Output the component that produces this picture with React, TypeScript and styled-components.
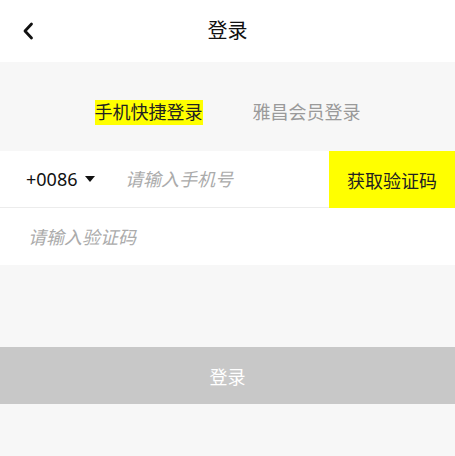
import React from "react";
import styled, { createGlobalStyle } from "styled-components";

const Global = createGlobalStyle`
  html, body { margin: 0; padding: 0; background: #f7f7f7; }
  body { font-family: "Noto Sans", "Noto Sans CJK SC", sans-serif; }
  * { box-sizing: border-box; }
`;

const Page = styled.div`
  width: 455px;
  height: 456px;
  background: #f7f7f7;
  display: flex;
  flex-direction: column;
  overflow: hidden;
`;

const Header = styled.header`
  height: 62px;
  background: #fff;
  display: grid;
  grid-template-columns: 62px 1fr 62px;
  align-items: center;
`;

const BackButton = styled.button`
  border: 0;
  background: none;
  padding: 0 0 0 21px;
  height: 100%;
  display: flex;
  align-items: center;
  cursor: pointer;
`;

const Title = styled.h1`
  margin: 0;
  font-size: 20px;
  font-weight: 400;
  color: #111;
  text-align: center;
  line-height: 62px;
`;

const Tabs = styled.nav`
  height: 89px;
  display: flex;
  justify-content: center;
  align-items: flex-start;
  padding-top: 38px;
  gap: 50px;
`;

const Tab = styled.span<{ $active?: boolean }>`
  font-size: 18px;
  line-height: 25px;
  height: 25px;
  color: ${(p) => (p.$active ? "#222" : "#9a9a9a")};
  background: ${(p) => (p.$active ? "#ffff00" : "transparent")};
`;

const Form = styled.div`
  background: #fff;
  display: flex;
  flex-direction: column;
`;

const Row = styled.div<{ $divider?: boolean }>`
  height: 57px;
  display: flex;
  align-items: stretch;
  border-bottom: ${(p) => (p.$divider ? "1px solid #ececec" : "0")};
`;

const Country = styled.div`
  display: flex;
  align-items: center;
  padding-left: 26px;
  width: 125px;
  font-size: 18px;
  color: #111;
  gap: 8px;
`;

const Caret = styled.span`
  width: 0;
  height: 0;
  border-left: 5.5px solid transparent;
  border-right: 5.5px solid transparent;
  border-top: 6px solid #111;
  margin-top: -1px;
`;

const Field = styled.input<{ $indent?: number }>`
  flex: 1;
  min-width: 0;
  border: 0;
  outline: none;
  background: transparent;
  font-family: "Noto Sans", "Noto Sans CJK SC", sans-serif;
  font-size: 18px;
  padding: 0 0 0 ${(p) => p.$indent ?? 0}px;
  color: #111;
  &::placeholder {
    color: #ababab;
    font-style: italic;
  }
`;

const CodeButton = styled.button`
  width: 126px;
  border: 0;
  background: #ffff00;
  font-family: "Noto Sans", "Noto Sans CJK SC", sans-serif;
  font-size: 18px;
  color: #222;
  padding: 0;
  margin-bottom: -1px;
  cursor: pointer;
`;

const Spacer = styled.div`
  height: 82px;
`;

const Submit = styled.button`
  height: 57px;
  border: 0;
  background: #c8c8c8;
  color: #fff;
  font-family: "Noto Sans", "Noto Sans CJK SC", sans-serif;
  font-size: 18px;
  padding: 0;
`;

export default function App() {
  return (
    <>
      <Global />
      <Page>
        <Header>
          <BackButton aria-label="返回">
            <svg width="14" height="18" viewBox="0 0 14 18">
              <path d="M10.5 2 L4 9 L10.5 16" fill="none" stroke="#111" strokeWidth="2.8" strokeLinecap="round" strokeLinejoin="round" />
            </svg>
          </BackButton>
          <Title>登录</Title>
          <span />
        </Header>
        <Tabs>
          <Tab $active>手机快捷登录</Tab>
          <Tab>雅昌会员登录</Tab>
        </Tabs>
        <Form>
          <Row $divider>
            <Country>
              +0086 <Caret />
            </Country>
            <Field placeholder="请输入手机号" />
            <CodeButton>获取验证码</CodeButton>
          </Row>
          <Row>
            <Field placeholder="请输入验证码" $indent={28} />
          </Row>
        </Form>
        <Spacer />
        <Submit>登录</Submit>
      </Page>
    </>
  );
}
